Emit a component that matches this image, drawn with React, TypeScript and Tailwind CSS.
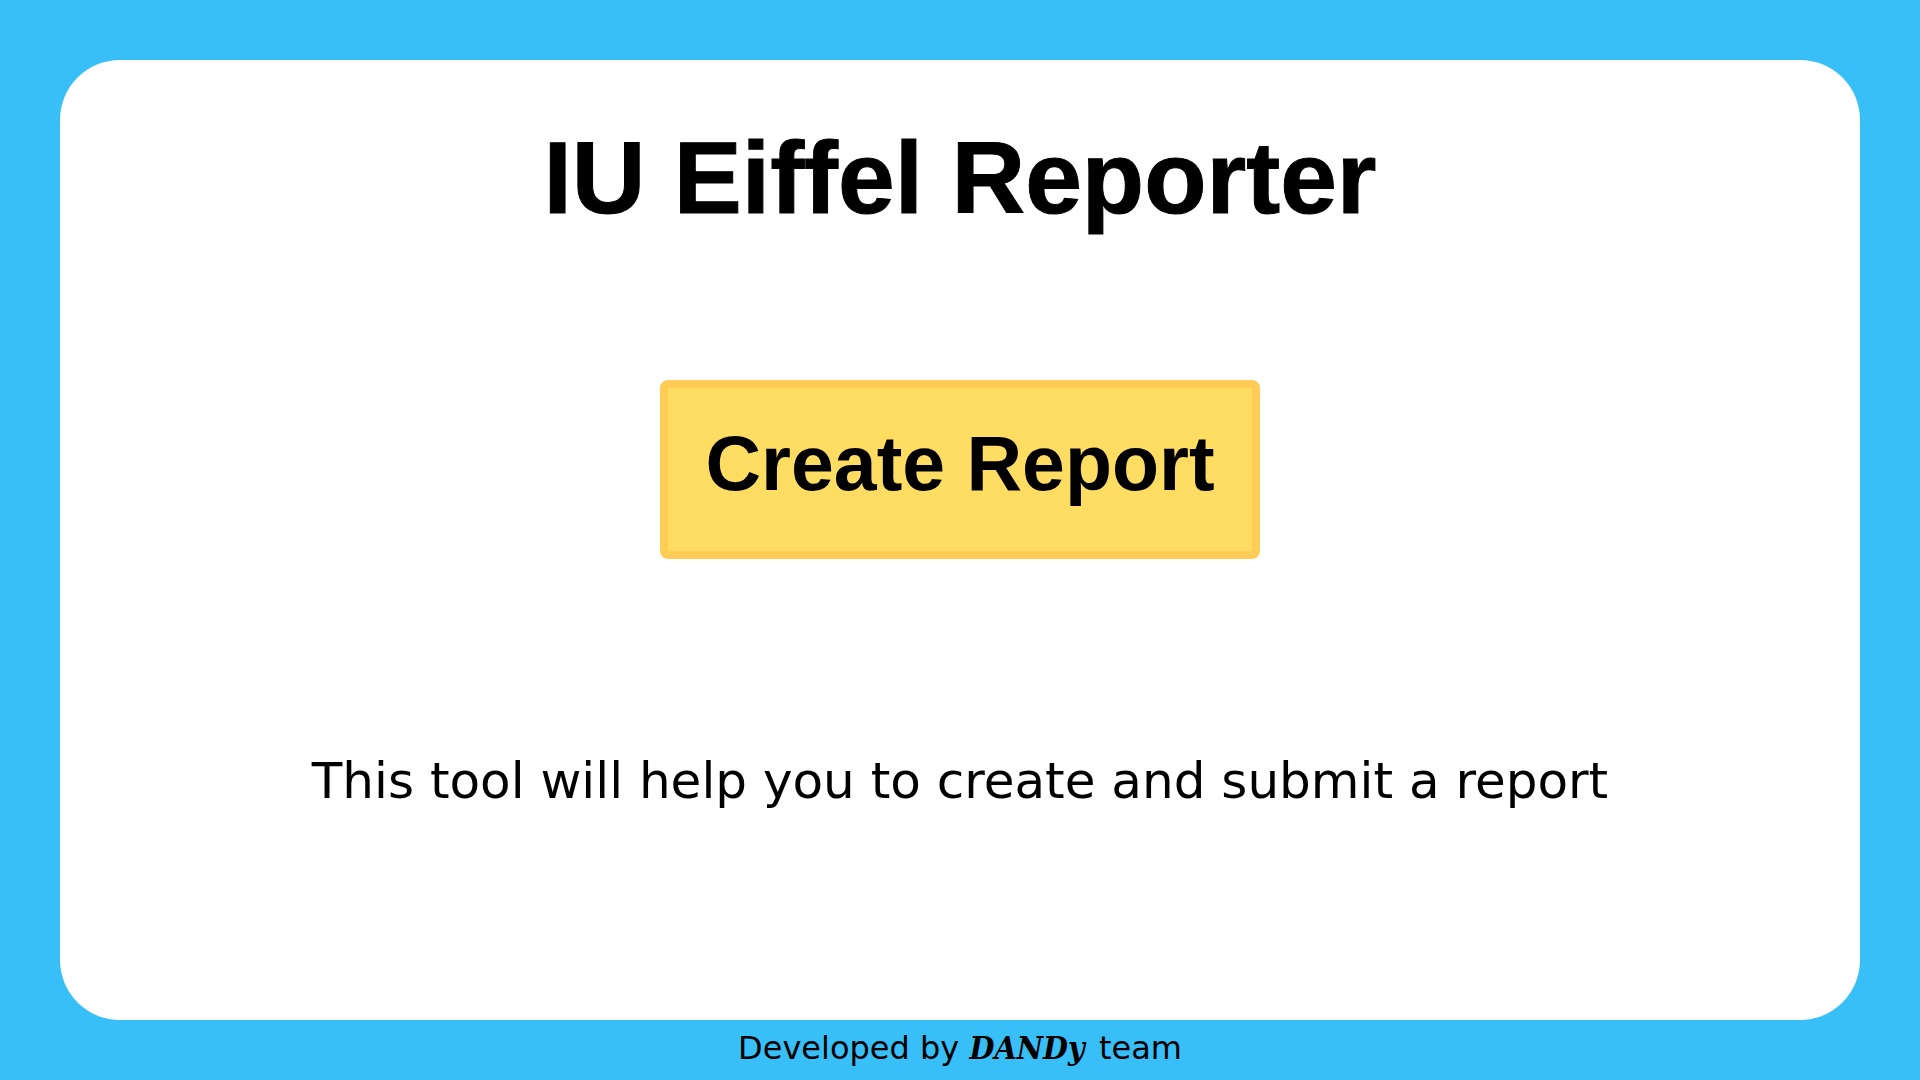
export default function App() {
  return (
    <div className="w-full h-screen bg-[#38bff8] flex flex-col px-[60px] pt-[60px] overflow-hidden">
      {/* Main card */}
      <main className="flex-1 bg-white rounded-[60px] flex flex-col items-center pt-[67px]">
        <h1 className="text-[102px] leading-none font-bold text-black font-['Liberation_Sans',Arial,sans-serif] [-webkit-text-stroke:1px_#000]">
          IU Eiffel Reporter
        </h1>

        <button className="mt-[151px] w-[600px] h-[179px] bg-[#ffdd63] border-[8px] border-[#ffcc55] rounded-[8px] flex items-center justify-center pb-[12px]">
          <span className="text-[77px] leading-none font-bold text-black font-['Liberation_Sans',Arial,sans-serif]">
            Create Report
          </span>
        </button>

        <p className="mt-[197px] text-[50px] leading-none text-black font-['DejaVu_Sans',Verdana,sans-serif]">
          This tool will help you to create and submit a report
        </p>
      </main>

      {/* Footer */}
      <footer className="h-[60px] shrink-0 flex items-center justify-center pb-[4px] text-[32px] leading-none text-black font-['DejaVu_Sans',Verdana,sans-serif]">
        <span>
          Developed by{" "}
          <b className="italic font-bold font-['DejaVu_Serif_Condensed','DejaVu_Serif',Georgia,serif] [font-stretch:condensed] pr-[4px]">
            DANDy
          </b>{" "}
          team
        </span>
      </footer>
    </div>
  );
}
